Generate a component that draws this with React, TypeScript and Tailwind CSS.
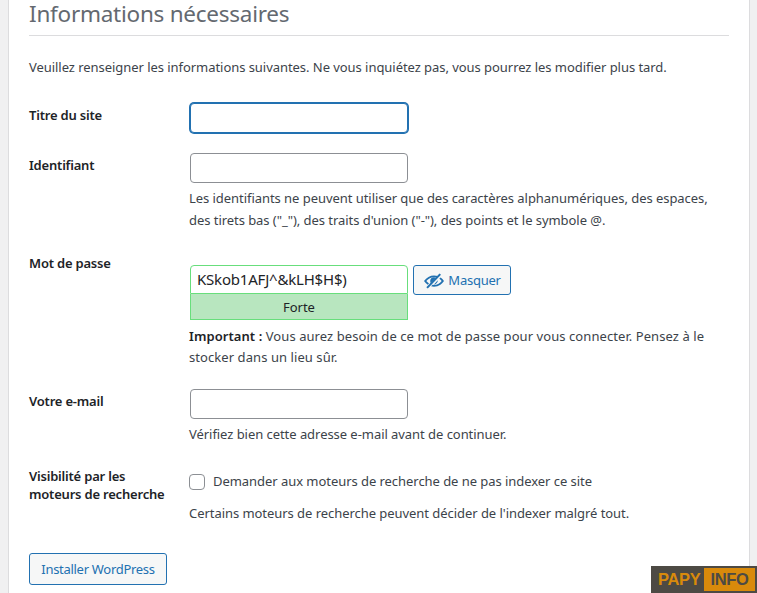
function Field({ focused = false }: { focused?: boolean }) {
  return (
    <input
      type="text"
      className={
        focused
          ? "block w-[218px] h-[30px] bg-white rounded-[4px] border border-[#2271b1] shadow-[0_0_0_1px_#2271b1] outline-none"
          : "block w-[218px] h-[30px] bg-white rounded-[4px] border border-[#8c8f94] outline-none"
      }
    />
  )
}

function EyeOffIcon() {
  return (
    <svg width="22" height="18" viewBox="0 0 22 18" fill="#2271b1">
      <path d="M1 9c2.600-3.700 6-5.600 10-5.600 1.400 0 2.700.2 3.900.7l-1.500 1.500c-.7-.3-1.500-.4-2.400-.4-3 0-5.600 1.300-7.700 3.800.8 1 1.700 1.800 2.700 2.400l-1.300 1.300C3.300 11.800 2 10.500 1 9z" />
      <path d="M21 9c-1 1.500-2.200 2.800-3.600 3.800-1.900 1.300-4 1.900-6.400 1.900-1 0-2-.1-2.900-.4l1.500-1.500c.5.100.9.100 1.400.1 3 0 5.600-1.300 7.700-3.900-.7-.9-1.500-1.600-2.400-2.200l1.300-1.300C18.900 6.400 20 7.600 21 9z" />
      <path d="M11 5.200c.7 0 1.300.2 1.900.5L7.700 10.900c-.3-.6-.5-1.200-.5-1.900 0-2.100 1.700-3.800 3.800-3.800zM14.800 8.300c.2 1.900-1.500 4.200-4 4.500z" />
      <path d="M16.500 1.500l1.500 1.300L4.800 16.500l-1.500-1.300z" />
    </svg>
  )
}

export default function App() {
  return (
    <div className="h-[593px] overflow-hidden bg-[#f0f0f1] pl-2 pr-[7px] relative font-['Noto_Sans',sans-serif] text-[13px] text-[#3c434a] tracking-[-0.05px]">
      <div className="h-full bg-white border-x border-[#dcdcde] px-5">
        <h1 className="h-9 pt-px border-b border-[#dcdcde] text-[#646970] text-[22.5px] leading-[26px] tracking-[-0.25px]">
          Informations nécessaires
        </h1>
        <p className="mt-[22px] leading-[19px]">
          Veuillez renseigner les informations suivantes. Ne vous inquiétez pas, vous pourrez les modifier plus tard.
        </p>

        <div className="mt-[26px] flex">
          <label className="w-[161px] pt-[3px] font-semibold text-[#1d2327] leading-[19px] tracking-[-0.2px]">Titre du site</label>
          <Field focused />
        </div>

        <div className="mt-[20px] flex">
          <label className="w-[161px] pt-[3px] font-semibold text-[#1d2327] leading-[19px] tracking-[-0.2px]">Identifiant</label>
          <div>
            <Field />
            <p className="mt-[4px] -ml-px leading-[22px] w-[530px]">
              Les identifiants ne peuvent utiliser que des caractères alphanumériques, des espaces, des tirets bas ("_"), des traits d'union ("-"), des points et le symbole @.
            </p>
          </div>
        </div>

        <div className="mt-[23px] flex">
          <label className="w-[161px] font-semibold text-[#1d2327] leading-[19px] tracking-[-0.2px]">Mot de passe</label>
          <div className="mt-[11px]">
            <div className="flex gap-[5px] items-start">
              <div className="w-[218px]">
                <div className="h-[29px] bg-white border border-[#68de7c] rounded-t-[4px] px-[6px] text-[15px] text-[#1d2327] leading-[27px] tracking-[-0.2px]">
                  KSkob1AFJ^&amp;kLH$H$)
                </div>
                <div className="h-[26px] pt-px bg-[#b8e6bf] border border-t-0 border-[#68de7c] text-center text-[#1d2327] leading-[25px]">
                  Forte
                </div>
              </div>
              <button className="w-[98px] h-[30px] pt-px flex items-center justify-center gap-[3px] bg-[#f6f7f7] border border-[#2271b1] rounded-[3px] text-[#2271b1] tracking-[-0.25px]">
                <EyeOffIcon />
                Masquer
              </button>
            </div>
            <p className="mt-[6px] -ml-px leading-[21px] w-[530px] tracking-[0.07px]">
              <strong className="font-semibold text-[#1d2327]">Important :</strong> Vous aurez besoin de ce mot de passe pour vous connecter. Pensez à le stocker dans un lieu sûr.
            </p>
          </div>
        </div>

        <div className="mt-[21px] flex">
          <label className="w-[161px] pt-[3px] font-semibold text-[#1d2327] leading-[19px] tracking-[-0.2px]">Votre e-mail</label>
          <div>
            <Field />
            <p className="mt-[4px] -ml-px leading-[22px]">Vérifiez bien cette adresse e-mail avant de continuer.</p>
          </div>
        </div>

        <div className="mt-[22px] flex">
          <label className="w-[161px] font-semibold text-[#1d2327] leading-[18px] tracking-[-0.2px]">
            Visibilité par les
            <br />
            moteurs de recherche
          </label>
          <div className="-ml-px">
            <label className="flex items-center gap-[8px] h-[20px] mt-[5px]">
              <span className="w-4 h-4 bg-white border border-[#8c8f94] rounded-[4px]" />
              Demander aux moteurs de recherche de ne pas indexer ce site
            </label>
            <p className="mt-[12px] leading-[19px]">Certains moteurs de recherche peuvent décider de l'indexer malgré tout.</p>
          </div>
        </div>

        <button className="mt-[30px] pt-[2px] block w-[138px] h-[32px] bg-[#f6f7f7] border border-[#2271b1] rounded-[3px] text-[#2271b1] tracking-[-0.3px]">
          Installer WordPress
        </button>
      </div>

      <div className="absolute right-0 bottom-0 w-[106px] h-[27px] bg-[#4d4a44] flex items-center pl-[7px] pr-[2px] font-['Liberation_Sans',sans-serif] font-bold text-[16.5px] tracking-[-0.3px]">
        <span className="w-[46px] text-[#d98a0b]">PAPY</span>
        <span className="flex-1 h-[23px] bg-[#d98a0b] text-[#4d4a44] text-center leading-[23px]">INFO</span>
      </div>
    </div>
  )
}
